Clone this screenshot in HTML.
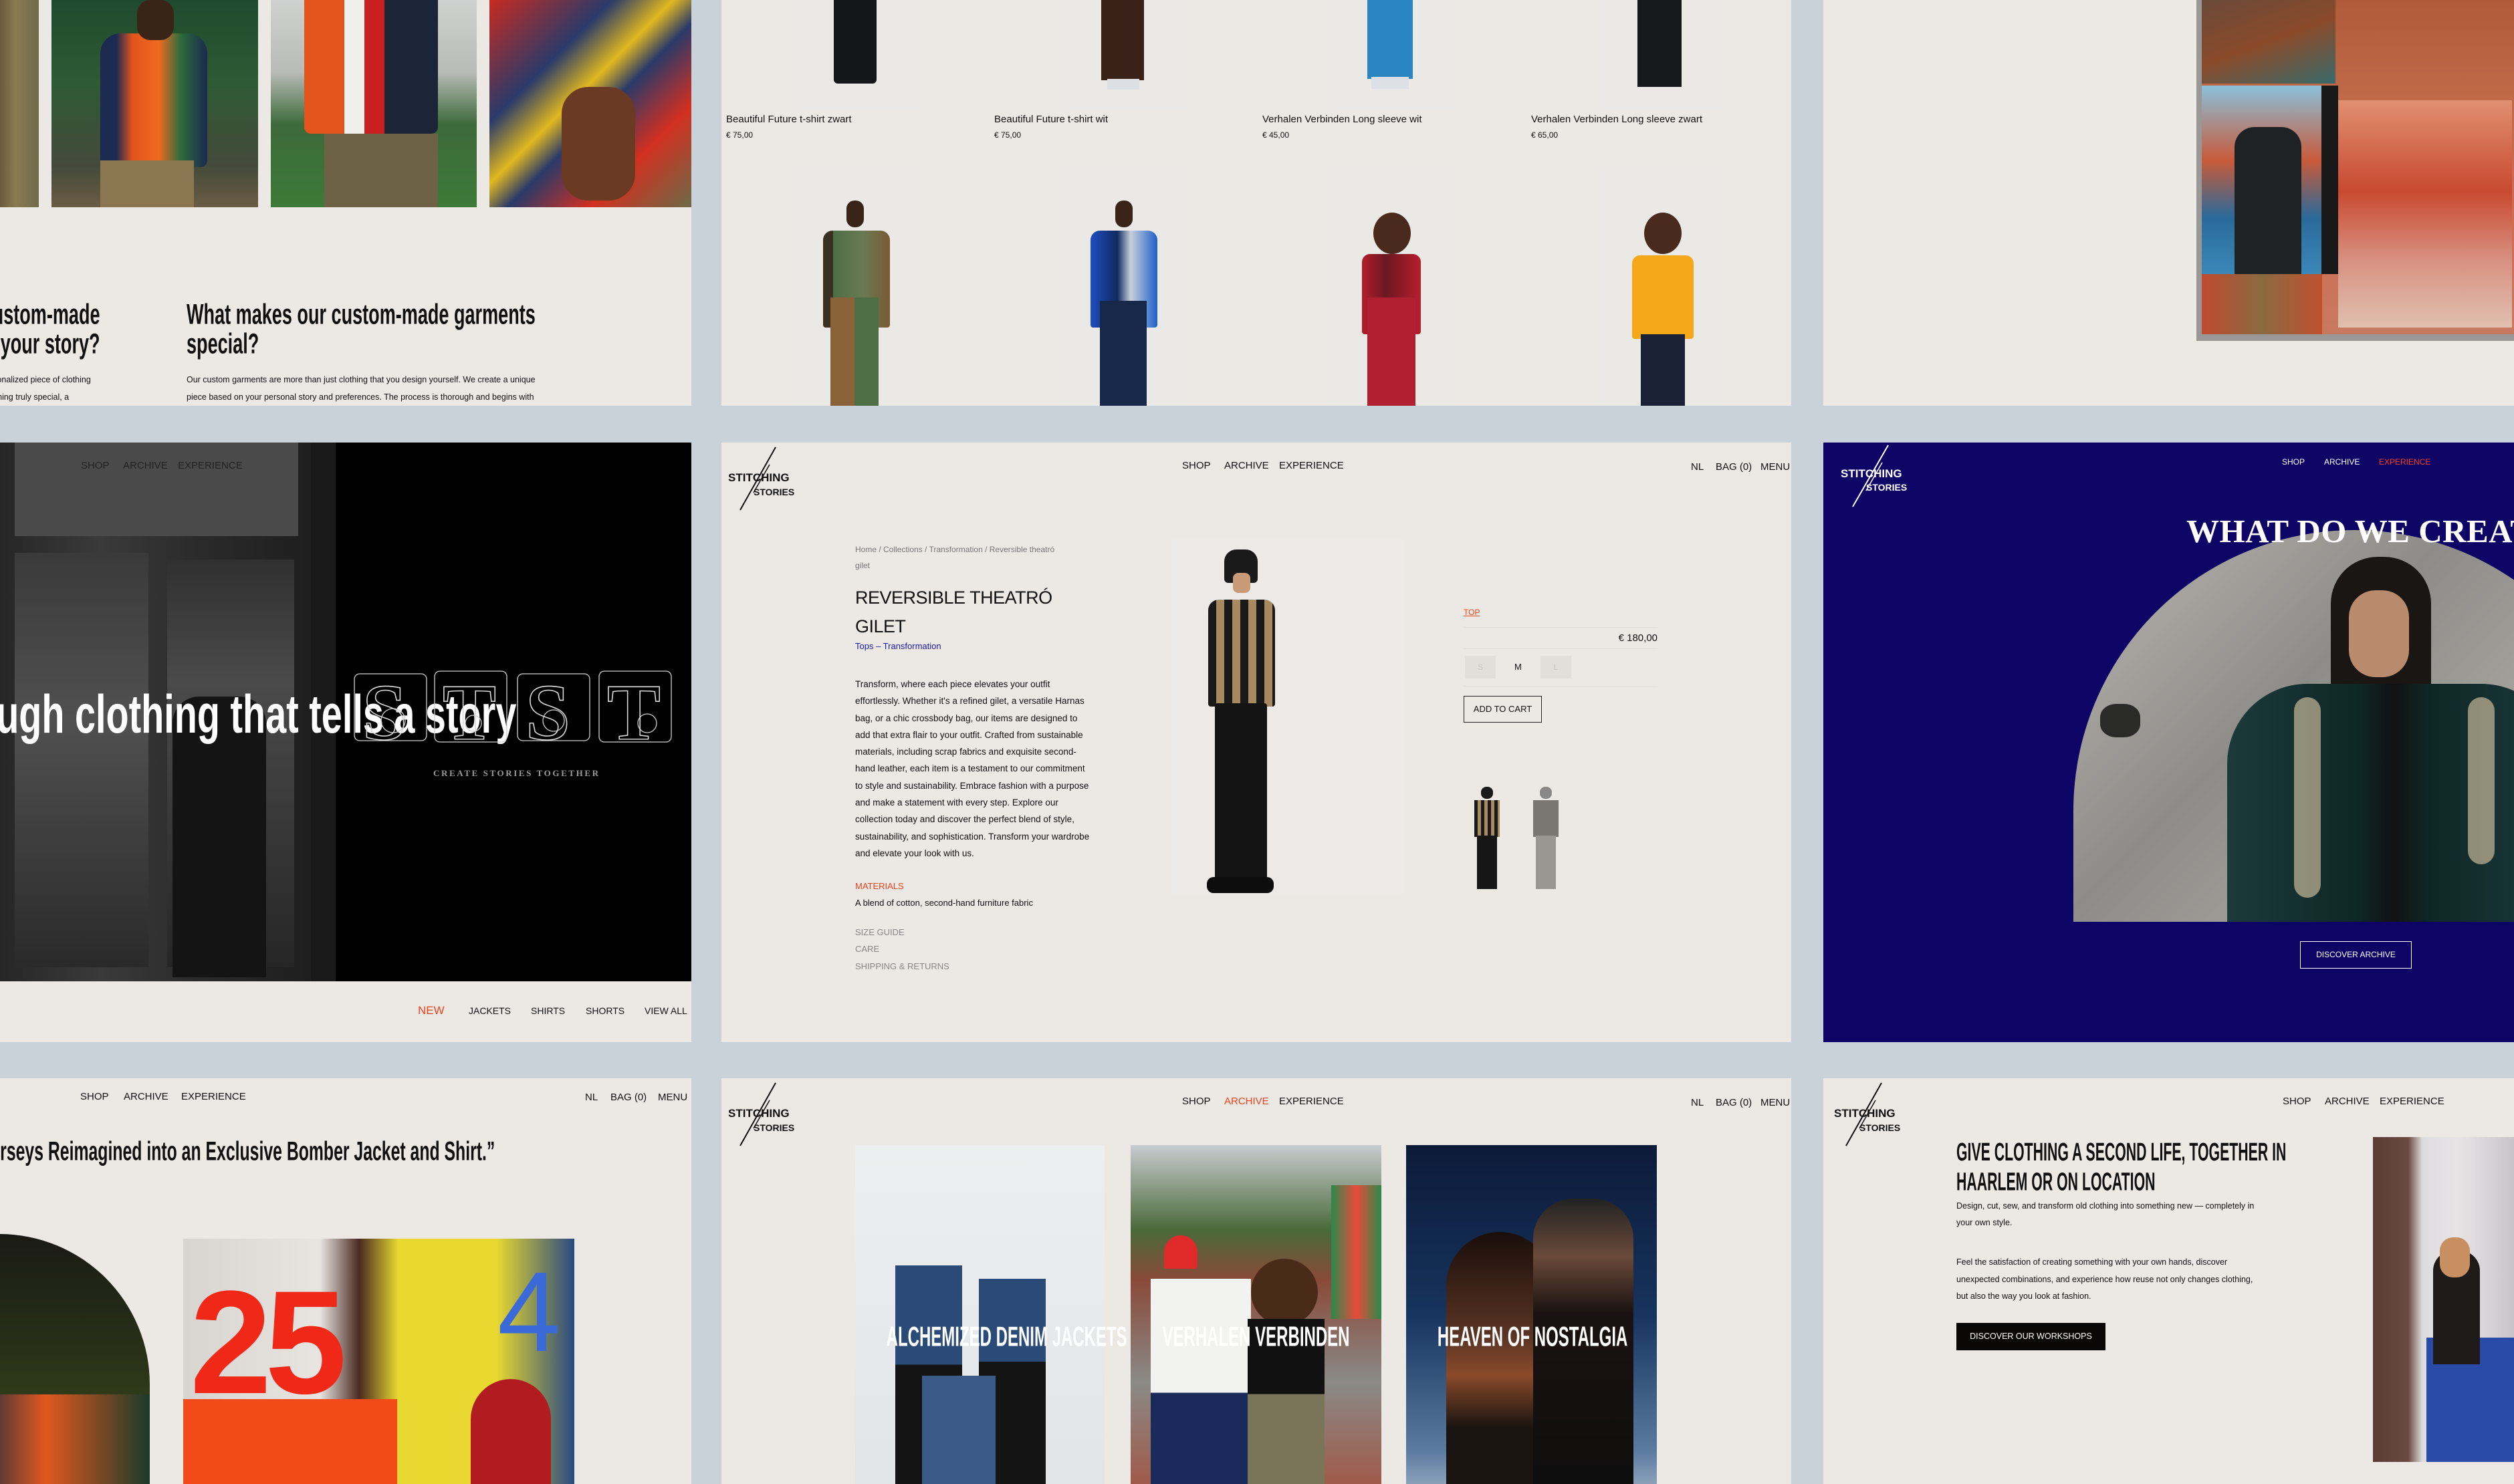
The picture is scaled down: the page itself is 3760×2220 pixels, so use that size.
<!DOCTYPE html>
<html><head><meta charset="utf-8">
<style>
*{margin:0;padding:0;box-sizing:border-box}
html{width:3760px;height:2220px;overflow:hidden}
body{width:3760px;height:2220px;background:#c9d1d9;position:relative;overflow:hidden;font-family:"Liberation Sans Narrow","Liberation Sans",sans-serif;color:#111}
.p{position:absolute;background:#ece8e4;overflow:hidden}
.a{position:absolute}
.nav{position:absolute;font-size:15px;letter-spacing:0;white-space:nowrap;color:#111}
.cond{font-family:"Liberation Sans Narrow","Liberation Sans",sans-serif;font-weight:700;transform-origin:0 0;white-space:nowrap}
.t{font-size:13px;white-space:nowrap}
</style></head><body>

<!-- ROW 1 COL 1 -->
<div class="p" style="left:0;top:0;width:1034px;height:607px">
  <div class="a" style="left:0;top:0;width:58px;height:310px;background:linear-gradient(90deg,#6b5a3c,#8a7a52 40%,#6e6a48)"></div>
  <div class="a" style="left:77px;top:0;width:309px;height:310px;background:linear-gradient(180deg,#1f4a2e,#2e5a34 40%,#444a3a 80%,#6a5c44)"></div>
  <div class="a" style="left:150px;top:50px;width:160px;height:200px;background:linear-gradient(90deg,#1b2a50 0,#1b2a50 15%,#e2551c 30%,#f06a20 55%,#2b6c3a 75%,#1b2a50 100%);border-radius:30px 30px 10px 10px"></div>
  <div class="a" style="left:205px;top:0;width:55px;height:60px;background:#3a2418;border-radius:20px"></div>
  <div class="a" style="left:150px;top:240px;width:140px;height:70px;background:#8a7650"></div>
  <div class="a" style="left:405px;top:0;width:308px;height:310px;background:linear-gradient(180deg,#cfd2d0 0,#b8bbb6 35%,#3d6a3a 60%,#3c7a38 100%)"></div>
  <div class="a" style="left:455px;top:0;width:200px;height:200px;background:linear-gradient(90deg,#e2541c 0,#e2541c 30%,#efefec 30%,#efefec 45%,#c82020 45%,#c82020 60%,#1c2438 60%);border-radius:0 0 10px 10px"></div>
  <div class="a" style="left:485px;top:200px;width:170px;height:110px;background:#6e6245"></div>
  <div class="a" style="left:732px;top:0;width:302px;height:310px;background:linear-gradient(135deg,#c82a20 0,#2a3a6a 30%,#e0b820 45%,#2a3a6a 55%,#d23020 75%,#6c6a46 100%)"></div>
  <div class="a" style="left:840px;top:130px;width:110px;height:170px;background:#6a3a22;border-radius:40px"></div>
  <div class="a cond" style="right:884px;top:448px;font-size:33px;line-height:34px;text-align:right;transform:scale(0.82,1.3);transform-origin:right top">Custom-made<br>What's your story?</div>
  <div class="a t" style="left:-40px;top:555px;line-height:26px;font-size:12.5px">A personalized piece of clothing<br>Something truly special, a</div>
  <div class="a cond" style="left:279px;top:448px;font-size:33px;line-height:34px;transform:scale(0.82,1.3)">What makes our custom-made garments<br>special?</div>
  <div class="a t" style="left:279px;top:555px;line-height:26px;font-size:12.5px">Our custom garments are more than just clothing that you design yourself. We create a unique<br>piece based on your personal story and preferences. The process is thorough and begins with</div>
</div>

<!-- ROW 1 COL 2 -->
<div class="p" style="left:1079px;top:0;width:1600px;height:607px">
  <div class="a" style="left:107px;top:0;width:190px;height:165px;background:#ebe9e6"></div>
  <div class="a" style="left:508px;top:0;width:190px;height:165px;background:#ebe9e6"></div>
  <div class="a" style="left:909px;top:0;width:190px;height:165px;background:#ebe9e6"></div>
  <div class="a" style="left:1310px;top:0;width:190px;height:165px;background:#ebe9e6"></div>
  <div class="a" style="left:168px;top:0;width:64px;height:125px;background:#15161a;border-radius:0 0 6px 6px"></div>
  <div class="a" style="left:568px;top:0;width:64px;height:120px;background:#3a2218"></div>
  <div class="a" style="left:577px;top:118px;width:48px;height:16px;background:#dcdfe4"></div>
  <div class="a" style="left:966px;top:0;width:68px;height:118px;background:#2a86c0"></div>
  <div class="a" style="left:972px;top:115px;width:56px;height:18px;background:#dde0e4"></div>
  <div class="a" style="left:1370px;top:0;width:66px;height:130px;background:#17181c"></div>
  <div class="a t" style="left:7px;top:170px;font-size:15px">Beautiful Future t-shirt zwart</div>
  <div class="a t" style="left:7px;top:195px;font-size:12px">€ 75,00</div>
  <div class="a t" style="left:408px;top:170px;font-size:15px">Beautiful Future t-shirt wit</div>
  <div class="a t" style="left:408px;top:195px;font-size:12px">€ 75,00</div>
  <div class="a t" style="left:809px;top:170px;font-size:15px">Verhalen Verbinden Long sleeve wit</div>
  <div class="a t" style="left:809px;top:195px;font-size:12px">€ 45,00</div>
  <div class="a t" style="left:1211px;top:170px;font-size:15px">Verhalen Verbinden Long sleeve zwart</div>
  <div class="a t" style="left:1211px;top:195px;font-size:12px">€ 65,00</div>
  <div class="a" style="left:107px;top:249px;width:190px;height:358px;background:#ebe9e6"></div>
  <div class="a" style="left:508px;top:249px;width:190px;height:358px;background:#ebe9e6"></div>
  <div class="a" style="left:909px;top:249px;width:190px;height:358px;background:#ebe9e6"></div>
  <div class="a" style="left:1310px;top:249px;width:190px;height:358px;background:#ebe9e6"></div>
  <div class="a" style="left:187px;top:300px;width:26px;height:40px;background:#3a2418;border-radius:12px"></div>
  <div class="a" style="left:152px;top:345px;width:100px;height:145px;background:linear-gradient(90deg,#3a3020 0,#3a3020 15%,#4e6e46 15%,#6a7a52 60%,#7a5a36 100%);border-radius:14px 14px 4px 4px"></div>
  <div class="a" style="left:163px;top:445px;width:72px;height:162px;background:linear-gradient(90deg,#8a6238 50%,#4e6e46 50%)"></div>
  <div class="a" style="left:589px;top:300px;width:26px;height:40px;background:#3a2418;border-radius:12px"></div>
  <div class="a" style="left:552px;top:345px;width:100px;height:145px;background:linear-gradient(90deg,#1e4ec0,#102a60 40%,#c8d0dc 60%,#1e60c8);border-radius:14px 14px 4px 4px"></div>
  <div class="a" style="left:566px;top:450px;width:70px;height:157px;background:#172848"></div>
  <div class="a" style="left:975px;top:318px;width:56px;height:62px;background:#4a2a1c;border-radius:50%"></div>
  <div class="a" style="left:958px;top:380px;width:88px;height:120px;background:linear-gradient(90deg,#b21e2a,#6a1822 40%,#b81e2c);border-radius:12px 12px 4px 4px"></div>
  <div class="a" style="left:966px;top:445px;width:72px;height:162px;background:#b02030"></div>
  <div class="a" style="left:1380px;top:318px;width:56px;height:62px;background:#4a2a1c;border-radius:50%"></div>
  <div class="a" style="left:1362px;top:382px;width:92px;height:125px;background:#f6a818;border-radius:12px 12px 4px 4px"></div>
  <div class="a" style="left:1375px;top:500px;width:66px;height:107px;background:#1a2036"></div>
</div>

<!-- ROW 1 COL 3 -->
<div class="p" style="left:2727px;top:0;width:1033px;height:607px">
  <div class="a" style="left:558px;top:0;width:480px;height:510px;background:#9a9896"></div>
  <div class="a" style="left:566px;top:0;width:470px;height:500px;background:linear-gradient(180deg,#b05a3a,#c06a48 30%,#d06a50 60%,#c87a60)"></div>
  <div class="a" style="left:566px;top:0;width:200px;height:125px;background:linear-gradient(160deg,#6a4a3a,#8a4a2a 50%,#3a6a6a)"></div>
  <div class="a" style="left:566px;top:128px;width:180px;height:282px;background:linear-gradient(180deg,#8ac0da,#c85a3a 40%,#2a6a9a 70%,#3a88b8)"></div>
  <div class="a" style="left:615px;top:190px;width:100px;height:220px;background:#1e2224;border-radius:30px 30px 0 0"></div>
  <div class="a" style="left:745px;top:128px;width:25px;height:282px;background:#181818"></div>
  <div class="a" style="left:770px;top:150px;width:260px;height:340px;background:linear-gradient(180deg,#e09070,#c84a30 40%,#d89080 70%,#e0c0b0)"></div>
  <div class="a" style="left:566px;top:410px;width:180px;height:90px;background:linear-gradient(90deg,#c04a30,#8a6a40,#c05030)"></div>
</div>

<!-- ROW 2 COL 1 -->
<div class="p" style="left:0;top:662px;width:1034px;height:897px">
  <div class="a" style="left:0;top:0;width:1034px;height:806px;background:#000"></div>
  <div class="a" style="left:0;top:0;width:502px;height:806px;background:linear-gradient(90deg,#262626,#3a3a3a 30%,#2a2a2a 60%,#1c1c1c)"></div>
  <div class="a" style="left:22px;top:0;width:424px;height:140px;background:#4a4a4a"></div>
  <div class="a" style="left:22px;top:165px;width:200px;height:620px;background:linear-gradient(180deg,#3a3a3a,#505050 40%,#2a2a2a)"></div>
  <div class="a" style="left:250px;top:175px;width:190px;height:610px;background:linear-gradient(180deg,#303030,#4a4a4a 30%,#262626)"></div>
  <div class="a" style="left:465px;top:0;width:37px;height:806px;background:#1a1a1a"></div>
  <div class="a" style="left:258px;top:380px;width:140px;height:420px;background:#141414;border-radius:40px 40px 0 0"></div>
  <div class="nav" style="left:121px;top:26px;color:#222">SHOP</div>
  <div class="nav" style="left:184px;top:26px;color:#222">ARCHIVE</div>
  <div class="nav" style="left:266px;top:26px;color:#222">EXPERIENCE</div>
  <div class="a cond" style="right:262px;top:356px;font-size:62px;line-height:80px;color:#fff;transform:scale(0.9,1.3);transform-origin:right top">Through clothing that tells a story</div>
  <svg class="a" style="left:528px;top:336px" width="482" height="118" viewBox="0 0 482 118">
    <g fill="none" stroke="#cfcfcf" stroke-width="1.3">
      <rect x="2" y="10" width="108" height="100" rx="8"/><rect x="122" y="6" width="108" height="106" rx="8"/>
      <rect x="246" y="10" width="108" height="100" rx="8"/><rect x="368" y="6" width="108" height="106" rx="8"/>
      <circle cx="60" cy="80" r="18"/><circle cx="300" cy="80" r="16"/><circle cx="440" cy="84" r="14"/><circle cx="180" cy="84" r="12"/>
    </g>
    <g font-family="Liberation Serif,serif" font-size="120" fill="none" stroke="#d8d8d8" stroke-width="1.6" font-weight="700">
      <text x="14" y="108">S</text><text x="134" y="108">T</text><text x="258" y="108">S</text><text x="380" y="108">T</text>
    </g>
  </svg>
  <div class="a" style="left:648px;top:487px;font-family:'Liberation Serif',serif;font-size:13px;letter-spacing:2.6px;color:#9a9a9a;font-weight:700">CREATE STORIES TOGETHER</div>
  <div class="nav" style="left:625px;top:840px;color:#e8441c;font-size:17px">NEW</div>
  <div class="nav" style="left:701px;top:842px;font-size:14px">JACKETS</div>
  <div class="nav" style="left:794px;top:842px;font-size:14px">SHIRTS</div>
  <div class="nav" style="left:876px;top:842px;font-size:14px">SHORTS</div>
  <div class="nav" style="left:964px;top:842px;font-size:14px">VIEW ALL</div>
</div>

<!-- ROW 2 COL 2 -->
<div class="p" style="left:1079px;top:662px;width:1600px;height:897px">
  <svg class="a" style="left:6px;top:3px" width="112" height="100" viewBox="0 0 112 100">
    <line x1="75" y1="4" x2="22" y2="98" stroke="#111" stroke-width="2"/>
    <line x1="66" y1="30" x2="42" y2="72" stroke="#111" stroke-width="1.5"/>
    <text x="4" y="55" font-family="Liberation Sans Narrow,sans-serif" font-weight="700" font-size="17" fill="#111">STITCHING</text>
    <text x="42" y="76" font-family="Liberation Sans Narrow,sans-serif" font-weight="700" font-size="14" fill="#111">STORIES</text>
  </svg>
  <div class="nav" style="left:689px;top:26px">SHOP</div>
  <div class="nav" style="left:752px;top:26px">ARCHIVE</div>
  <div class="nav" style="left:834px;top:26px">EXPERIENCE</div>
  <div class="nav" style="left:1450px;top:28px">NL</div>
  <div class="nav" style="left:1487px;top:28px">BAG (0)</div>
  <div class="nav" style="left:1554px;top:28px">MENU</div>
  <div class="a t" style="left:200px;top:153px;font-size:12px;color:#777">Home / Collections / Transformation / Reversible theatró</div>
  <div class="a t" style="left:200px;top:177px;font-size:12px;color:#777">gilet</div>
  <div class="a" style="left:200px;top:211px;font-size:27px;line-height:43px;font-family:'Liberation Sans',sans-serif;letter-spacing:-0.5px">REVERSIBLE THEATRÓ<br>GILET</div>
  <div class="a t" style="left:200px;top:297px;color:#1a1aa8;font-size:13px">Tops – Transformation</div>
  <div class="a" style="left:200px;top:349px;width:352px;font-size:13.5px;line-height:25.3px">Transform, where each piece elevates your outfit effortlessly. Whether it's a refined gilet, a versatile Harnas bag, or a chic crossbody bag, our items are designed to add that extra flair to your outfit. Crafted from sustainable materials, including scrap fabrics and exquisite second-hand leather, each item is a testament to our commitment to style and sustainability. Embrace fashion with a purpose and make a statement with every step. Explore our collection today and discover the perfect blend of style, sustainability, and sophistication. Transform your wardrobe and elevate your look with us.</div>
  <div class="a t" style="left:200px;top:656px;color:#e8441c">MATERIALS</div>
  <div class="a t" style="left:200px;top:681px">A blend of cotton, second-hand furniture fabric</div>
  <div class="a t" style="left:200px;top:725px;color:#888">SIZE GUIDE</div>
  <div class="a t" style="left:200px;top:750px;color:#888">CARE</div>
  <div class="a t" style="left:200px;top:776px;color:#888">SHIPPING &amp; RETURNS</div>
  <div class="a" style="left:673px;top:144px;width:348px;height:532px;background:#eceae7"></div>
  <div class="a" style="left:752px;top:160px;width:50px;height:50px;background:#1a1a1a;border-radius:18px 18px 6px 6px"></div>
  <div class="a" style="left:765px;top:195px;width:26px;height:30px;background:#c89a78;border-radius:8px"></div>
  <div class="a" style="left:728px;top:235px;width:100px;height:160px;background:repeating-linear-gradient(90deg,#1a1a1a 0,#1a1a1a 12px,#a88a60 12px,#a88a60 24px);border-radius:16px 16px 4px 4px"></div>
  <div class="a" style="left:738px;top:390px;width:78px;height:265px;background:#141414;border-radius:4px"></div>
  <div class="a" style="left:726px;top:650px;width:100px;height:24px;background:#0c0c0c;border-radius:10px"></div>
  <div class="a t" style="left:1110px;top:247px;color:#e8441c;text-decoration:underline;font-size:12px">TOP</div>
  <div class="a" style="left:1110px;top:276px;width:290px;height:1px;background:#ddd"></div>
  <div class="a" style="left:1300px;top:284px;width:100px;text-align:right;font-size:15px">€ 180,00</div>
  <div class="a" style="left:1110px;top:308px;width:290px;height:1px;background:#ddd"></div>
  <div class="a" style="left:1112px;top:319px;width:46px;height:34px;background:#e2dfdb;color:#c8c5c1;font-size:12px;text-align:center;line-height:34px">S</div>
  <div class="a" style="left:1186px;top:319px;font-size:13px;line-height:34px">M</div>
  <div class="a" style="left:1225px;top:319px;width:46px;height:34px;background:#e2dfdb;color:#c8c5c1;font-size:12px;text-align:center;line-height:34px">L</div>
  <div class="a" style="left:1110px;top:364px;width:290px;height:1px;background:#ddd"></div>
  <div class="a" style="left:1110px;top:379px;width:117px;height:40px;border:1.5px solid #222;font-size:13px;text-align:center;line-height:37px">ADD TO CART</div>
  <div class="a" style="left:1136px;top:515px;width:18px;height:18px;background:#1a1a1a;border-radius:8px"></div>
  <div class="a" style="left:1126px;top:535px;width:38px;height:55px;background:repeating-linear-gradient(90deg,#1a1a1a 0,#1a1a1a 5px,#a88a60 5px,#a88a60 10px)"></div>
  <div class="a" style="left:1130px;top:588px;width:30px;height:80px;background:#161616"></div>
  <div class="a" style="left:1224px;top:515px;width:18px;height:18px;background:#888;border-radius:8px"></div>
  <div class="a" style="left:1214px;top:535px;width:38px;height:55px;background:#7a7672"></div>
  <div class="a" style="left:1218px;top:588px;width:30px;height:80px;background:#9a9692"></div>
</div>

<!-- ROW 2 COL 3 -->
<div class="p" style="left:2727px;top:662px;width:1033px;height:897px;background:#0e0466">
  <svg class="a" style="left:22px;top:0" width="112" height="100" viewBox="0 0 112 100">
    <line x1="75" y1="4" x2="22" y2="96" stroke="#fff" stroke-width="2"/>
    <line x1="66" y1="30" x2="42" y2="72" stroke="#fff" stroke-width="1.5"/>
    <text x="4" y="52" font-family="Liberation Sans Narrow,sans-serif" font-weight="700" font-size="17" fill="#fff">STITCHING</text>
    <text x="42" y="72" font-family="Liberation Sans Narrow,sans-serif" font-weight="700" font-size="14" fill="#fff">STORIES</text>
  </svg>
  <div class="nav" style="left:686px;top:22px;color:#fff;font-family:'Liberation Sans',sans-serif;font-size:12px">SHOP</div>
  <div class="nav" style="left:749px;top:22px;color:#fff;font-family:'Liberation Sans',sans-serif;font-size:12px">ARCHIVE</div>
  <div class="nav" style="left:831px;top:22px;color:#ff3a1c;font-family:'Liberation Sans',sans-serif;font-size:12px">EXPERIENCE</div>
  <div class="a" style="left:374px;top:131px;width:840px;height:586px;border-radius:420px 420px 0 0;overflow:hidden;background:linear-gradient(135deg,#b8b6b0,#8e8c88 40%,#a8a6a0 70%,#6a6660)">
    <div class="a" style="left:40px;top:260px;width:60px;height:50px;background:#2a2a28;border-radius:40%"></div>
    <div class="a" style="left:385px;top:40px;width:150px;height:300px;background:#1a1614;border-radius:70px 70px 30px 30px"></div>
    <div class="a" style="left:412px;top:90px;width:90px;height:130px;background:#b98a6c;border-radius:40px"></div>
    <div class="a" style="left:230px;top:230px;width:500px;height:360px;background:linear-gradient(90deg,#1c3a3a,#0e2626 40%,#111 50%,#0e2626 60%,#1c3a3a);border-radius:120px 120px 0 0"></div>
    <div class="a" style="left:330px;top:250px;width:40px;height:300px;background:#c8b898;opacity:.7;border-radius:20px"></div>
    <div class="a" style="left:590px;top:250px;width:40px;height:250px;background:#c8b898;opacity:.7;border-radius:20px"></div>
  </div>
  <div class="a" style="left:543px;top:104px;font-family:'Liberation Serif',serif;font-weight:700;font-size:49px;color:#fff;white-space:nowrap;letter-spacing:0.5px">WHAT DO WE CREATE?</div>
  <div class="a" style="left:713px;top:746px;width:167px;height:41px;border:1.5px solid #fff;color:#fff;font-size:12px;text-align:center;line-height:38px;font-family:'Liberation Sans',sans-serif">DISCOVER ARCHIVE</div>
</div>

<!-- ROW 3 COL 1 -->
<div class="p" style="left:0;top:1613px;width:1034px;height:607px">
  <div class="nav" style="left:120px;top:19px">SHOP</div>
  <div class="nav" style="left:185px;top:19px">ARCHIVE</div>
  <div class="nav" style="left:271px;top:19px">EXPERIENCE</div>
  <div class="nav" style="left:875px;top:20px">NL</div>
  <div class="nav" style="left:913px;top:20px">BAG (0)</div>
  <div class="nav" style="left:984px;top:20px">MENU</div>
  <div class="a cond" style="right:294px;top:86px;font-size:31px;line-height:36px;transform:scale(0.8,1.3);transform-origin:right top">“Football Jerseys Reimagined into an Exclusive Bomber Jacket and Shirt.”</div>
  <div class="a" style="left:-226px;top:233px;width:450px;height:500px;border-radius:225px 225px 0 0;overflow:hidden;background:linear-gradient(180deg,#1a1a14,#2a3418 40%,#3a4a1e 70%,#22361e)">
    <div class="a" style="left:190px;top:240px;width:260px;height:260px;background:linear-gradient(90deg,#1a2a40,#e2581e 40%,#1a3a2a)"></div>
  </div>
  <div class="a" style="left:274px;top:240px;width:585px;height:367px;background:linear-gradient(90deg,#d8d4d0 0,#e8e4e0 35%,#4a2a22 45%,#e8d830 55%,#e8d830 80%,#2a4a80 100%)">
    <div class="a" style="left:10px;top:40px;width:190px;height:230px;color:#f02818;font-family:'Liberation Sans',sans-serif;font-weight:700;font-size:220px;line-height:230px;letter-spacing:-10px">25</div>
    <div class="a" style="left:0;top:240px;width:320px;height:130px;background:#f24a18"></div>
    <div class="a" style="left:430px;top:210px;width:120px;height:160px;background:#b01c20;border-radius:60px 60px 0 0"></div>
    <div class="a" style="left:470px;top:30px;width:100px;height:160px;color:#3a6ad8;font-family:'Liberation Sans',sans-serif;font-size:170px;line-height:160px">4</div>
  </div>
</div>

<!-- ROW 3 COL 2 -->
<div class="p" style="left:1079px;top:1613px;width:1600px;height:607px">
  <svg class="a" style="left:6px;top:3px" width="112" height="100" viewBox="0 0 112 100">
    <line x1="75" y1="4" x2="22" y2="98" stroke="#111" stroke-width="2"/>
    <line x1="66" y1="30" x2="42" y2="72" stroke="#111" stroke-width="1.5"/>
    <text x="4" y="55" font-family="Liberation Sans Narrow,sans-serif" font-weight="700" font-size="17" fill="#111">STITCHING</text>
    <text x="42" y="76" font-family="Liberation Sans Narrow,sans-serif" font-weight="700" font-size="14" fill="#111">STORIES</text>
  </svg>
  <div class="nav" style="left:689px;top:26px">SHOP</div>
  <div class="nav" style="left:752px;top:26px;color:#e8441c">ARCHIVE</div>
  <div class="nav" style="left:834px;top:26px">EXPERIENCE</div>
  <div class="nav" style="left:1450px;top:28px">NL</div>
  <div class="nav" style="left:1487px;top:28px">BAG (0)</div>
  <div class="nav" style="left:1554px;top:28px">MENU</div>
  <div class="a" style="left:200px;top:100px;width:373px;height:507px;background:linear-gradient(180deg,#eceeef,#e2e4e6);overflow:hidden">
    <div class="a" style="left:60px;top:180px;width:100px;height:330px;background:linear-gradient(180deg,#2a4a78 0,#2a4a78 45%,#141414 45%)"></div>
    <div class="a" style="left:185px;top:200px;width:100px;height:310px;background:linear-gradient(180deg,#2a4a78 0,#2a4a78 40%,#141414 40%)"></div>
    <div class="a" style="left:100px;top:345px;width:110px;height:170px;background:#3a5a88"></div>
  </div>
  <div class="a" style="left:612px;top:100px;width:375px;height:507px;background:linear-gradient(180deg,#c8ccd0 0,#4a6a3a 25%,#8a4a3a 40%,#8a8a86 70%,#a05a4a 100%);overflow:hidden">
    <div class="a" style="left:300px;top:60px;width:75px;height:200px;background:linear-gradient(90deg,#2a8a4a,#e84a3a 50%,#2a8a4a)"></div>
    <div class="a" style="left:30px;top:200px;width:150px;height:310px;background:linear-gradient(180deg,#f2f2f0 0,#f2f2f0 55%,#1a2a5a 55%)"></div>
    <div class="a" style="left:50px;top:135px;width:50px;height:50px;background:#e02a2a;border-radius:25px 25px 4px 4px"></div>
    <div class="a" style="left:180px;top:170px;width:100px;height:100px;background:#4a2a18;border-radius:50%"></div>
    <div class="a" style="left:175px;top:260px;width:115px;height:250px;background:linear-gradient(180deg,#111 0,#111 45%,#7a7458 45%)"></div>
  </div>
  <div class="a" style="left:1024px;top:100px;width:375px;height:507px;background:linear-gradient(180deg,#0c1a38,#16345e 50%,#5a7aa0 90%,#8aa0ba);overflow:hidden">
    <div class="a" style="left:60px;top:130px;width:160px;height:390px;background:linear-gradient(180deg,#1a0e0a 0,#5a3424 40%,#8a4a2a 55%,#1a1410 75%);border-radius:80px 80px 0 0"></div>
    <div class="a" style="left:190px;top:80px;width:150px;height:430px;background:linear-gradient(180deg,#222 0,#6a4a3a 20%,#1a1210 40%,#0e0e0e);border-radius:60px 60px 0 0"></div>
  </div>
  <div class="a cond" style="left:200px;top:363px;width:373px;text-align:center;font-size:32px;color:#fff;transform:scale(0.75,1.3);transform-origin:center top">ALCHEMIZED DENIM JACKETS</div>
  <div class="a cond" style="left:612px;top:363px;width:375px;text-align:center;font-size:32px;color:#fff;transform:scale(0.75,1.3);transform-origin:center top">VERHALEN VERBINDEN</div>
  <div class="a cond" style="left:1024px;top:363px;width:375px;text-align:center;font-size:32px;color:#fff;transform:scale(0.75,1.3);transform-origin:center top">HEAVEN OF NOSTALGIA</div>
</div>

<!-- ROW 3 COL 3 -->
<div class="p" style="left:2727px;top:1613px;width:1033px;height:607px">
  <svg class="a" style="left:12px;top:3px" width="112" height="100" viewBox="0 0 112 100">
    <line x1="75" y1="4" x2="22" y2="98" stroke="#111" stroke-width="2"/>
    <line x1="66" y1="30" x2="42" y2="72" stroke="#111" stroke-width="1.5"/>
    <text x="4" y="55" font-family="Liberation Sans Narrow,sans-serif" font-weight="700" font-size="17" fill="#111">STITCHING</text>
    <text x="42" y="76" font-family="Liberation Sans Narrow,sans-serif" font-weight="700" font-size="14" fill="#111">STORIES</text>
  </svg>
  <div class="nav" style="left:687px;top:26px">SHOP</div>
  <div class="nav" style="left:750px;top:26px">ARCHIVE</div>
  <div class="nav" style="left:832px;top:26px">EXPERIENCE</div>
  <div class="a cond" style="left:199px;top:88px;font-size:28px;line-height:33px;transform:scale(0.76,1.35)">GIVE CLOTHING A SECOND LIFE, TOGETHER IN<br>HAARLEM OR ON LOCATION</div>
  <div class="a" style="left:199px;top:179px;font-size:12.5px;line-height:25px">Design, cut, sew, and transform old clothing into something new — completely in<br>your own style.</div>
  <div class="a" style="left:199px;top:263px;font-size:12.5px;line-height:25.5px">Feel the satisfaction of creating something with your own hands, discover<br>unexpected combinations, and experience how reuse not only changes clothing,<br>but also the way you look at fashion.</div>
  <div class="a" style="left:199px;top:366px;width:223px;height:41px;background:#0a0707;color:#fff;font-size:12.5px;text-align:center;line-height:41px">DISCOVER OUR WORKSHOPS</div>
  <div class="a" style="left:822px;top:88px;width:211px;height:486px;background:linear-gradient(90deg,#5a3a34 0,#6a4a40 25%,#dcdcde 35%,#e8e4e6 60%,#c8c4c8 100%);overflow:hidden">
    <div class="a" style="left:80px;top:300px;width:131px;height:186px;background:#2a4aa8"></div>
    <div class="a" style="left:90px;top:170px;width:70px;height:170px;background:#1e1a1a;border-radius:30px 30px 0 0"></div>
    <div class="a" style="left:100px;top:150px;width:45px;height:60px;background:#c89060;border-radius:20px"></div>
  </div>
</div>

</body></html>
